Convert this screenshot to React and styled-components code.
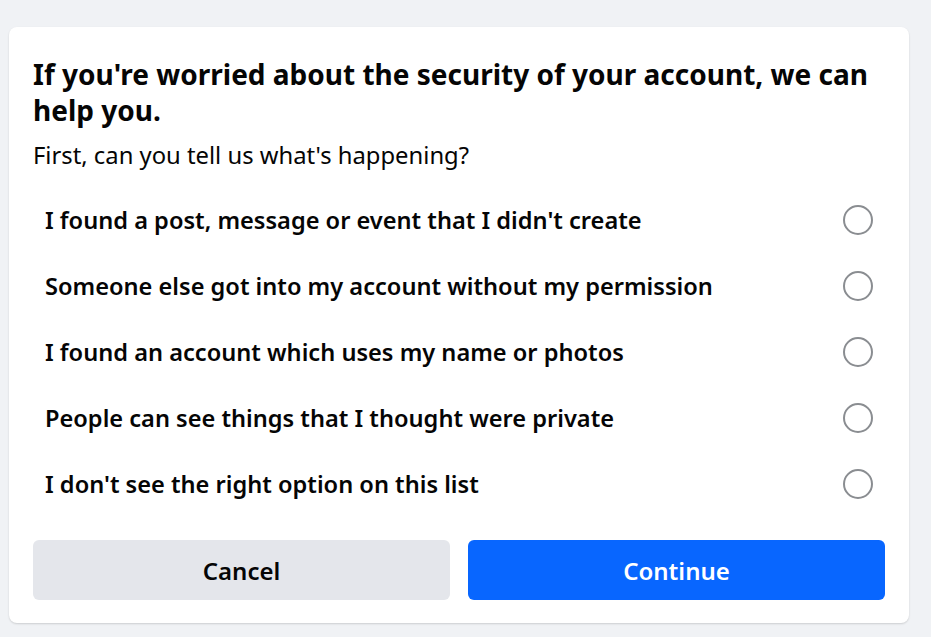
import React, { useState } from "react"
import styled, { createGlobalStyle } from "styled-components"

const GlobalStyle = createGlobalStyle`
  html, body {
    margin: 0;
    padding: 0;
    background: #f0f2f5;
    font-family: "Noto Sans", "Open Sans", Arial, sans-serif;
    color: #050505;
  }
`

const Page = styled.div`
  padding: 27px 22px 14px 9px;
`

const Card = styled.div`
  width: 900px;
  box-sizing: border-box;
  background: #fff;
  border-radius: 8px;
  box-shadow: 0 1px 2px rgba(0, 0, 0, 0.15);
  padding: 29px 24px 23px;
`

const Title = styled.h2`
  margin: 0;
  font-size: 28px;
  font-weight: 700;
  line-height: 36px;
`

const Subtitle = styled.p`
  margin: 11px 0 0;
  font-size: 23.8px;
  line-height: 32px;
`

const Options = styled.div`
  display: flex;
  flex-direction: column;
  margin-top: 16px;
`

const Option = styled.label`
  display: flex;
  align-items: center;
  justify-content: space-between;
  height: 66px;
  padding: 0 12px;
  font-size: 23.6px;
  font-weight: 600;
  cursor: pointer;
`

const Radio = styled.span`
  width: 26px;
  height: 26px;
  border-radius: 50%;
  border: 2px solid ${(p) => (p.checked ? "#0866ff" : "#8a8d91")};
  box-shadow: ${(p) => (p.checked ? "inset 0 0 0 5px #fff" : "none")};
  background: ${(p) => (p.checked ? "#0866ff" : "#fff")};
  flex-shrink: 0;
`

const Actions = styled.div`
  display: grid;
  grid-template-columns: 1fr 1fr;
  gap: 18px;
  margin-top: 23px;
`

const Button = styled.button`
  height: 60px;
  border: none;
  border-radius: 6px;
  font-family: inherit;
  font-size: 24px;
  font-weight: 600;
  cursor: pointer;
  background: ${(p) => (p.primary ? "#0866ff" : "#e4e6eb")};
  color: ${(p) => (p.primary ? "#fff" : "#050505")};
`

const options = [
  "I found a post, message or event that I didn't create",
  "Someone else got into my account without my permission",
  "I found an account which uses my name or photos",
  "People can see things that I thought were private",
  "I don't see the right option on this list",
]

export default function App() {
  const [selected, setSelected] = useState(null)
  return (
    <>
      <GlobalStyle />
      <Page>
        <Card>
          <Title>If you're worried about the security of your account, we can help you.</Title>
          <Subtitle>First, can you tell us what's happening?</Subtitle>
          <Options>
            {options.map((text, i) => (
              <Option key={i} onClick={() => setSelected(i)}>
                <span>{text}</span>
                <Radio checked={selected === i} />
              </Option>
            ))}
          </Options>
          <Actions>
            <Button>Cancel</Button>
            <Button primary>Continue</Button>
          </Actions>
        </Card>
      </Page>
    </>
  )
}
